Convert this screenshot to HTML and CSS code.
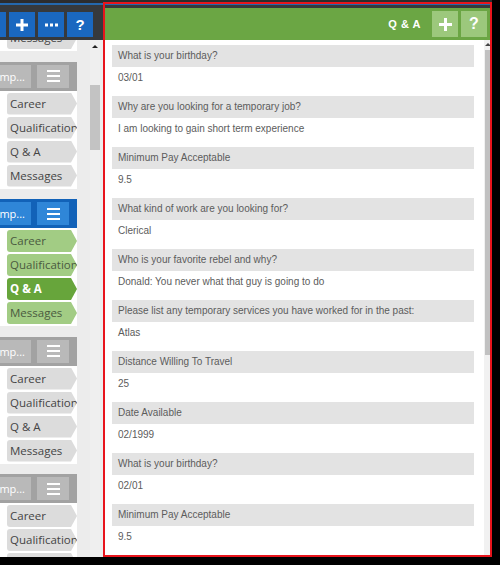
FILE: index.html
```html
<!DOCTYPE html>
<html lang="en">
<head>
    <meta charset="UTF-8">
    <title>Q &amp; A</title>
    <link rel="stylesheet" href="styles.css">
</head>
<body>
<div class="screen">
    <div class="strip"></div>
    <div class="main">
        <aside class="side">
            <div class="toolbar">
                <span class="tb-btn first"></span>
                <span class="tb-btn">
                    <svg width="12" height="12" viewBox="0 0 12 12"><rect x="4.5" y="0" width="3" height="12" fill="#fff"/><rect x="0" y="4.5" width="12" height="3" fill="#fff"/></svg>
                </span>
                <span class="tb-btn">
                    <svg width="13" height="4" viewBox="0 0 13 4"><rect x="0" y="0.5" width="3" height="3" fill="#fff"/><rect x="5" y="0.5" width="3" height="3" fill="#fff"/><rect x="10" y="0.5" width="3" height="3" fill="#fff"/></svg>
                </span>
                <span class="tb-btn q">?</span>
            </div>
            <div class="side-body">
                <div class="cards">
                    <div class="card first">
                        <div class="card-head"><span class="grp-name"><span>Temp...</span></span><span class="grp-menu"><i></i><i></i><i></i></span></div>
                        <div class="tabs">
                            <div class="tab">Career</div>
                            <div class="tab">Qualification</div>
                            <div class="tab">Q &amp; A</div>
                            <div class="tab">Messages</div>
                        </div>
                    </div>
                    <div class="card">
                        <div class="card-head"><span class="grp-name"><span>Temp...</span></span><span class="grp-menu"><i></i><i></i><i></i></span></div>
                        <div class="tabs">
                            <div class="tab">Career</div>
                            <div class="tab">Qualification</div>
                            <div class="tab">Q &amp; A</div>
                            <div class="tab">Messages</div>
                        </div>
                    </div>
                    <div class="card active">
                        <div class="card-head"><span class="grp-name"><span>Temp...</span></span><span class="grp-menu"><i></i><i></i><i></i></span></div>
                        <div class="tabs">
                            <div class="tab">Career</div>
                            <div class="tab">Qualification</div>
                            <div class="tab sel">Q &amp; A</div>
                            <div class="tab">Messages</div>
                        </div>
                    </div>
                    <div class="card">
                        <div class="card-head"><span class="grp-name"><span>Temp...</span></span><span class="grp-menu"><i></i><i></i><i></i></span></div>
                        <div class="tabs">
                            <div class="tab">Career</div>
                            <div class="tab">Qualification</div>
                            <div class="tab">Q &amp; A</div>
                            <div class="tab">Messages</div>
                        </div>
                    </div>
                    <div class="card">
                        <div class="card-head"><span class="grp-name"><span>Temp...</span></span><span class="grp-menu"><i></i><i></i><i></i></span></div>
                        <div class="tabs">
                            <div class="tab">Career</div>
                            <div class="tab">Qualification</div>
                            <div class="tab">Q &amp; A</div>
                            <div class="tab">Messages</div>
                        </div>
                    </div>
                </div>
                <div class="sbar"><span class="sbar-up"></span><span class="sbar-thumb"></span></div>
            </div>
        </aside>
        <section class="panel">
            <div class="panel-head">
                <span class="panel-title">Q &amp; A</span>
                <span class="ph-btn">
                    <svg width="13" height="13" viewBox="0 0 13 13"><rect x="5" y="0" width="3" height="13" fill="#fff"/><rect x="0" y="5" width="13" height="3" fill="#fff"/></svg>
                </span>
                <span class="ph-btn q">?</span>
            </div>
            <div class="panel-body">
                <div class="qa-list">
                    <div class="qa-q">What is your birthday?</div>
                    <div class="qa-a">03/01</div>
                    <div class="qa-q">Why are you looking for a temporary job?</div>
                    <div class="qa-a">I am looking to gain short term experience</div>
                    <div class="qa-q">Minimum Pay Acceptable</div>
                    <div class="qa-a">9.5</div>
                    <div class="qa-q">What kind of work are you looking for?</div>
                    <div class="qa-a">Clerical</div>
                    <div class="qa-q">Who is your favorite rebel and why?</div>
                    <div class="qa-a">Donald: You never what that guy is going to do</div>
                    <div class="qa-q">Please list any temporary services you have worked for in the past:</div>
                    <div class="qa-a">Atlas</div>
                    <div class="qa-q">Distance Willing To Travel</div>
                    <div class="qa-a">25</div>
                    <div class="qa-q">Date Available</div>
                    <div class="qa-a">02/1999</div>
                    <div class="qa-q">What is your birthday?</div>
                    <div class="qa-a">02/01</div>
                    <div class="qa-q">Minimum Pay Acceptable</div>
                    <div class="qa-a">9.5</div>
                </div>
                <div class="vbar"><span class="vbar-up"></span><span class="vbar-thumb"></span></div>
            </div>
        </section>
    </div>
    <div class="mark"></div>
</div>
</body>
</html>
```

FILE: styles.css
```css
*{
    margin:0;
    padding:0;
    box-sizing:border-box;
}
body{
    background:#000;
    font-family:"Liberation Sans", Arial, sans-serif;
}
.screen{
    position:relative;
    width:492px;
    height:557px;
    overflow:hidden;
    background:#ececec;
}
.strip{
    height:5px;
    background:#2b2c2e;
    border-bottom:2px solid #2468ad;
}
.main{
    display:flex;
    height:552px;
}

/* left column */
.side{
    width:103px;
    display:flex;
    flex-direction:column;
}
.toolbar{
    height:35px;
    background:#36393c;
    display:flex;
    gap:3px;
    padding-top:7px;
}
.tb-btn{
    width:26px;
    height:25px;
    background:#1a68c0;
    display:flex;
    align-items:center;
    justify-content:center;
    color:#fff;
    font-weight:bold;
    font-size:15px;
    flex-shrink:0;
}
.tb-btn.first{
    margin-left:-20px;
}
.side-body{
    flex:1;
    display:flex;
    overflow:hidden;
}
.cards{
    width:77px;
    display:flex;
    flex-direction:column;
    gap:10.5px;
}
.card{
    background:#fff;
    flex-shrink:0;
}
.card.first{
    margin-top:-116px;
}
.card-head{
    height:29px;
    background:#a2a2a2;
    display:flex;
    gap:6px;
    padding:3px 8px 0 0;
}
.card.active .card-head{
    background:#1262b8;
}
.grp-name{
    width:31px;
    height:23px;
    background:#b9b9b9;
    display:flex;
    justify-content:flex-end;
    align-items:center;
    overflow:hidden;
    white-space:nowrap;
    padding-right:6px;
    color:#fff;
    font-family:"Open Sans", sans-serif;
    font-size:11px;
}
.grp-name span{
    flex-shrink:0;
}
.grp-menu{
    width:32px;
    height:23px;
    background:#b9b9b9;
    display:flex;
    flex-direction:column;
    align-items:center;
    justify-content:center;
    gap:3px;
}
.card.active .grp-name,.card.active .grp-menu{
    background:#2f86d8;
}
.grp-menu i{
    display:block;
    width:13px;
    height:2px;
    background:#fff;
}
.tabs{
    padding:2px 0 2px 7px;
    display:flex;
    flex-direction:column;
    gap:2px;
}
.tab{
    height:22px;
    line-height:22px;
    background:#dcdcdc;
    border-radius:3px 0 0 3px;
    clip-path:polygon(0 0, calc(100% - 6px) 0, 100% 50%, calc(100% - 6px) 100%, 0 100%);
    padding-left:3px;
    white-space:nowrap;
    overflow:hidden;
    color:#444;
    font-family:"Open Sans", sans-serif;
    font-size:11.5px;
}
.card.active .tab{
    background:#a2cc84;
    color:#4a5a40;
}
.card.active .tab.sel{
    background:#67a53b;
    color:#fff;
    font-weight:bold;
}
.sbar{
    width:10px;
    margin-left:13px;
    background:#efefef;
    display:flex;
    flex-direction:column;
    align-items:center;
}
.sbar-up{
    margin-top:5px;
    border-left:3px solid transparent;
    border-right:3px solid transparent;
    border-bottom:3px solid #222;
}
.sbar-thumb{
    margin-top:37px;
    width:10px;
    height:65px;
    background:#c3c3c3;
}

/* right panel */
.panel{
    width:389px;
    display:flex;
    flex-direction:column;
    background:#36393c;
    padding-top:3px;
}
.panel-head{
    height:32px;
    background:#6ba644;
    display:flex;
    align-items:center;
    justify-content:flex-end;
    gap:3px;
    padding-right:5px;
}
.panel-title{
    color:#fff;
    font-weight:bold;
    font-size:11px;
    letter-spacing:0.5px;
    margin-right:8px;
}
.ph-btn{
    width:26px;
    height:26px;
    background:#9cc87c;
    display:flex;
    align-items:center;
    justify-content:center;
    color:#fff;
    font-weight:bold;
    font-size:16px;
}
.panel-body{
    flex:1;
    background:#fff;
    display:flex;
    overflow:hidden;
}
.qa-list{
    flex:1;
    padding:5px 10px 0 9px;
    font-size:10px;
    color:#5c5c5c;
}
.qa-q{
    height:22px;
    line-height:22px;
    background:#e3e3e3;
    padding-left:6px;
    white-space:nowrap;
    overflow:hidden;
}
.qa-a{
    height:29px;
    line-height:21px;
    padding-left:6px;
}
.vbar{
    width:8px;
    background:#f1f1f1;
    display:flex;
    flex-direction:column;
    padding-left:1px;
}
.vbar-up{
    margin-top:3px;
    width:0;
    border-left:3px solid transparent;
    border-right:3px solid transparent;
    border-bottom:3px solid #444;
}
.vbar-thumb{
    margin-top:4px;
    width:6px;
    height:305px;
    background:#c1c1c1;
}

/* red annotation frame */
.mark{
    position:absolute;
    left:103px;
    top:2px;
    width:389px;
    height:555px;
    border:2px solid #e8141c;
}
```
